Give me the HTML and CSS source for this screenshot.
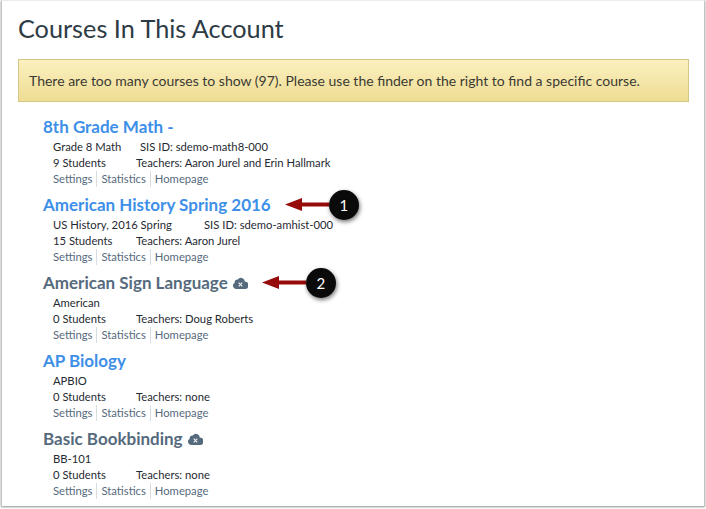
FILE: index.html
```html
<!DOCTYPE html>
<html lang="en">
<head>
  <meta charset="UTF-8">
  <title>Courses In This Account</title>
  <link rel="stylesheet" href="styles.css">
</head>
<body>
  <div class="window">
    <h1>Courses In This Account</h1>
    <div class="alert">There are too many courses to show (97). Please use the finder on the right to find a specific course.</div>

    <ul class="courses">
      <li class="course">
        <h2><a href="#">8th Grade Math -</a></h2>
        <div class="info"><span class="code code-math">Grade 8 Math</span><span>SIS ID: sdemo-math8-000</span></div>
        <div class="info"><span class="students">9 Students</span><span>Teachers: Aaron Jurel and Erin Hallmark</span></div>
        <div class="links"><a href="#">Settings</a><a href="#">Statistics</a><a href="#">Homepage</a></div>
      </li>
      <li class="course">
        <h2>
          <a href="#">American History Spring 2016</a>
          <span class="pointer">
            <svg class="arrow" width="44" height="13" viewBox="0 0 44 13"><path d="M0 6.5 L17 0 V4.5 H44 V8.5 H17 V13 Z" fill="#960a0a"/></svg>
            <span class="callout">1</span>
          </span>
        </h2>
        <div class="info"><span class="code code-hist">US History, 2016 Spring</span><span>SIS ID: sdemo-amhist-000</span></div>
        <div class="info"><span class="students">15 Students</span><span>Teachers: Aaron Jurel</span></div>
        <div class="links"><a href="#">Settings</a><a href="#">Statistics</a><a href="#">Homepage</a></div>
      </li>
      <li class="course unpublished">
        <h2>
          <a href="#">American Sign Language</a>
          <svg class="cloud" width="15" height="13" viewBox="0 0 15 13"><path d="M3.2 13 A3.2 3.2 0 0 1 1.6 7 A3.2 3.2 0 0 1 4.8 3.6 A3.8 3.8 0 0 1 11.8 5.4 A3.8 3.8 0 0 1 11.6 13 Z" fill="#566a7d"/><path d="M5.7 6.7 L9.3 10.3 M9.3 6.7 L5.7 10.3" stroke="#e8ecef" stroke-width="1.2"/></svg>
          <span class="pointer">
            <svg class="arrow" width="44" height="13" viewBox="0 0 44 13"><path d="M0 6.5 L17 0 V4.5 H44 V8.5 H17 V13 Z" fill="#960a0a"/></svg>
            <span class="callout">2</span>
          </span>
        </h2>
        <div class="info"><span>American</span></div>
        <div class="info"><span class="students">0 Students</span><span>Teachers: Doug Roberts</span></div>
        <div class="links"><a href="#">Settings</a><a href="#">Statistics</a><a href="#">Homepage</a></div>
      </li>
      <li class="course">
        <h2><a href="#">AP Biology</a></h2>
        <div class="info"><span>APBIO</span></div>
        <div class="info"><span class="students">0 Students</span><span>Teachers: none</span></div>
        <div class="links"><a href="#">Settings</a><a href="#">Statistics</a><a href="#">Homepage</a></div>
      </li>
      <li class="course unpublished">
        <h2>
          <a href="#">Basic Bookbinding</a>
          <svg class="cloud" width="15" height="13" viewBox="0 0 15 13"><path d="M3.2 13 A3.2 3.2 0 0 1 1.6 7 A3.2 3.2 0 0 1 4.8 3.6 A3.8 3.8 0 0 1 11.8 5.4 A3.8 3.8 0 0 1 11.6 13 Z" fill="#566a7d"/><path d="M5.7 6.7 L9.3 10.3 M9.3 6.7 L5.7 10.3" stroke="#e8ecef" stroke-width="1.2"/></svg>
        </h2>
        <div class="info"><span>BB-101</span></div>
        <div class="info"><span class="students">0 Students</span><span>Teachers: none</span></div>
        <div class="links"><a href="#">Settings</a><a href="#">Statistics</a><a href="#">Homepage</a></div>
      </li>
    </ul>
  </div>
</body>
</html>
```
FILE: styles.css
```css
html, body {
  margin: 0;
  height: 100%;
  overflow: hidden;
}
body {
  background: #fff;
  font-family: Lato, sans-serif;
  color: #2d3b45;
}
.window {
  box-sizing: border-box;
  width: 704px;
  height: 506px;
  margin-left: 1px;
  padding: 0 15px 0 16px;
  background: #fff;
  border-left: 1px solid #c4c4c4;
  border-right: 1px solid #c4c4c4;
  border-top: 1px solid #ececec;
  box-shadow: 0 1px 2px rgba(0, 0, 0, 0.45);
  overflow: hidden;
}
h1 {
  margin: 0;
  padding-top: 11px;
  font-size: 25.25px;
  line-height: 32px;
  font-weight: 400;
  color: #2d3b45;
}
.alert {
  box-sizing: border-box;
  height: 43px;
  margin-top: 15px;
  padding: 0 10px;
  line-height: 41px;
  font-size: 14px;
  color: #3b3a33;
  background: linear-gradient(#fbf0c0, #efdd93);
  border: 1px solid #d4c684;
}
.courses {
  list-style: none;
  margin: 0;
  padding: 10px 0 0 25px;
}
.course {
  height: 78px;
}
.course h2 {
  display: flex;
  align-items: center;
  gap: 5px;
  margin: 0;
  height: 25px;
  padding-top: 2px;
  font-size: 17px;
  font-weight: 700;
}
.course h2 a {
  color: #3d8fe8;
  text-decoration: none;
}
.course.unpublished h2 a {
  color: #566a7d;
}
.info, .links {
  display: flex;
  margin-left: 10px;
  height: 16px;
  font-size: 11.25px;
  line-height: 16px;
  color: #1f2a32;
}
.code-math {
  width: 87px;
}
.code-hist {
  width: 151px;
}
.students {
  width: 83px;
}
.links a {
  color: #566a7d;
  text-decoration: none;
}
.links a + a {
  margin-left: 4px;
  padding-left: 4px;
  border-left: 1px solid #d8dde1;
}
.pointer {
  display: flex;
  align-items: center;
  margin-left: 9px;
}
.arrow {
  display: block;
}
.callout {
  width: 30px;
  height: 30px;
  border-radius: 50%;
  background: #0a0a0a;
  color: #fff;
  font-size: 15px;
  font-weight: 400;
  line-height: 30px;
  text-align: center;
  box-shadow: 1px 2px 4px rgba(0, 0, 0, 0.55);
}
```
